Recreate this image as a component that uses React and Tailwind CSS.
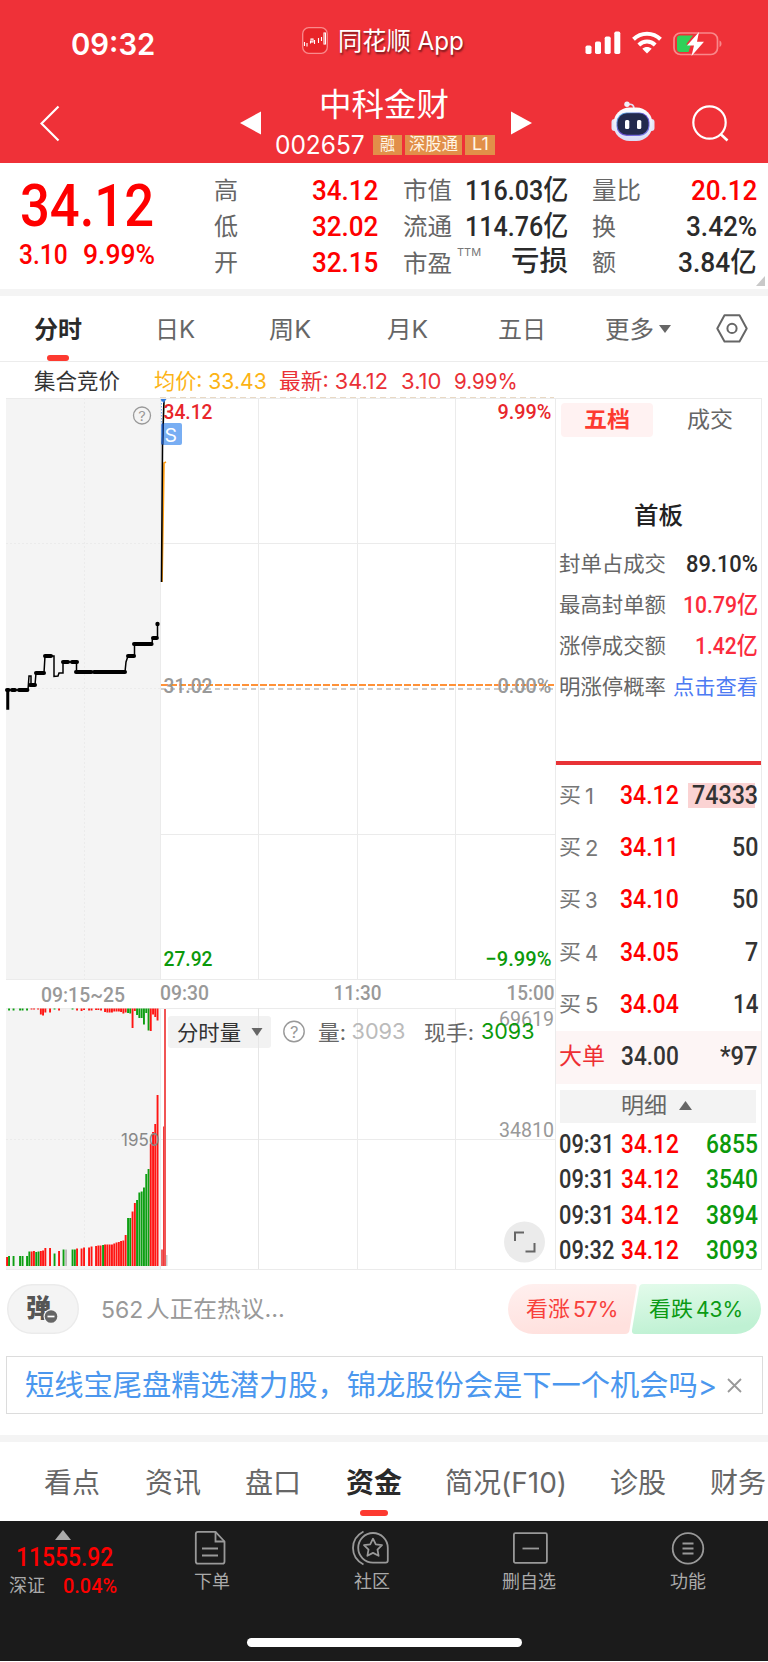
import React, { useLayoutEffect, useRef } from "react";

const NUM = "[font-family:Roboto,'Noto_Sans_CJK_SC',sans-serif]";
const UI = "[font-family:Inter,'Noto_Sans_CJK_SC',sans-serif]";

// Text condensed or stretched horizontally to fill the width of its box.
function Fit({ className = "", children }) {
  const outer = useRef(null);
  const inner = useRef(null);
  useLayoutEffect(() => {
    const w = inner.current.offsetWidth;
    if (w) inner.current.style.transform = `scaleX(${outer.current.clientWidth / w})`;
  }, []);
  return (
    <span ref={outer} className={`block shrink-0 whitespace-nowrap ${className}`}>
      <span ref={inner} className="inline-block origin-left">{children}</span>
    </span>
  );
}

function StatusBar() {
  return (
    <div className="flex h-[86px] items-center text-white">
      <Fit className={`ml-[71px] mt-[1px] w-[84px] text-[30px] font-semibold leading-[86px] ${UI}`}>09:32</Fit>
      <svg className="ml-[147px] -mt-[5px]" width="26" height="27" viewBox="0 0 26 27">
        <rect x="0.7" y="0.7" width="24.6" height="25.6" rx="6" fill="#e82428" stroke="#f98a8c" strokeWidth="1.3" />
        <g fill="none" stroke="#fff" strokeWidth="1.1">
          <path d="M2.5 15v4M5 16v3.5M8.500 14v2.500M12.500 13v4M16.500 11v5M19.500 10v4" />
          <rect x="9" y="12" width="2" height="3" />
          <rect x="22" y="6" width="1.500" height="11" />
        </g>
      </svg>
      <Fit className={`ml-[10px] w-[126px] -mt-[4px] text-[25px] leading-[40px] [text-shadow:1px_2px_2px_rgba(0,0,0,.5)] ${UI}`}>同花顺 App</Fit>
      <svg className="ml-[121px]" width="36" height="24" viewBox="0 0 36 24">
        <g fill="#fff">
          <rect x="0.500" y="14.500" width="6" height="8.500" rx="1.700" />
          <rect x="10" y="10.500" width="6" height="12.500" rx="1.700" />
          <rect x="19.700" y="5.500" width="6" height="17.500" rx="1.700" />
          <rect x="29.300" y="0.500" width="6" height="22.500" rx="1.700" />
        </g>
      </svg>
      <svg className="ml-[11px]" width="30" height="24" viewBox="0 0 30 24">
        <g fill="none" stroke="#fff" strokeWidth="4">
          <path d="M1.500 8.300C9 1 21 1 28.500 8.300" />
          <path d="M6.800 14C11.500 9.400 18.500 9.400 23.200 14" />
        </g>
        <path d="M10.300 17.700C13 15.400 17 15.400 19.700 17.700L15 22.600Z" fill="#fff" />
      </svg>
      <svg className="ml-[11px] mt-[1px]" width="50" height="26" viewBox="0 0 50 26">
        <rect x="1" y="2" width="43.500" height="21.500" rx="6.500" fill="none" stroke="#f9888a" strokeWidth="1.700" />
        <path d="M46.500 9.500c2.700 1 2.700 5.600 0 6.600z" fill="#f9888a" />
        <path d="M7 4.500H20L13 13.500h5L15.500 21H7a3 3 0 0 1-3-3V7.500a3 3 0 0 1 3-3Z" fill="#30d158" />
        <path d="M26 1L14 14.500h7L18.500 25 31 10.700h-7z" fill="#fff" />
      </svg>
    </div>
  );
}

function TitleBar() {
  return (
    <div className="flex h-[77px] items-start text-white">
      <svg className="ml-[40px] mt-[19px]" width="20" height="37" viewBox="0 0 20 37">
        <path d="M18.500 1.500L1.500 18.500 18.500 35.500" fill="none" stroke="#fff" strokeWidth="2.200" />
      </svg>
      <svg className="ml-[180px] mt-[25px]" width="21" height="24"><path d="M0 12L21 0.500V23.500z" fill="#fff" /></svg>
      <div className="ml-[14px] flex w-[220px] flex-col items-center">
        <Fit className={`-ml-[2px] mt-[1px] w-[130px] text-[32px] leading-[36px] ${UI}`}>中科金财</Fit>
        <div className="mt-[11px] flex h-[22px] w-full items-center">
          <Fit className={`w-[90px] text-[25px] leading-[22px] ${UI}`}>002657</Fit>
          <div className={`ml-[8px] flex gap-[3px] text-[17px] leading-[19px] text-[#fff6e6] ${UI}`}>
            <span className="flex h-[20px] w-[29px] items-start justify-center bg-[#e28f49]"><Fit className="w-[15px]">融</Fit></span>
            <span className="flex h-[20px] w-[57px] items-start justify-center bg-[#e28f49]"><Fit className="w-[49px]">深股通</Fit></span>
            <span className="flex h-[20px] w-[30px] items-start justify-center bg-[#e28f49]"><Fit className="w-[17px]">L1</Fit></span>
          </div>
        </div>
      </div>
      <svg className="ml-[16px] mt-[25px]" width="21" height="24"><path d="M21 12L0 0.500V23.500z" fill="#fff" /></svg>
      <svg className="ml-[79px] mt-[15px]" width="44" height="41" viewBox="0 0 44 41">
        <defs>
          <linearGradient id="head" x1="0" y1="0" x2="0" y2="1">
            <stop offset="0" stopColor="#fff" /><stop offset="1" stopColor="#d8dcf6" />
          </linearGradient>
          <linearGradient id="visor" x1="0" y1="0" x2="1" y2="1">
            <stop offset="0" stopColor="#58b8e0" /><stop offset="0.500" stopColor="#6a4dd0" /><stop offset="1" stopColor="#7d86e8" />
          </linearGradient>
        </defs>
        <path d="M17 3.500c4-1 6 1 6 4" fill="none" stroke="#dfe0f5" strokeWidth="1.600" />
        <circle cx="16" cy="3.200" r="2.700" fill="#f1f1fb" />
        <rect x="0.500" y="18" width="7" height="12" rx="3" fill="#e2e4f7" />
        <rect x="36.500" y="18" width="7" height="12" rx="3" fill="#e2e4f7" />
        <rect x="2.500" y="6.500" width="39" height="33.500" rx="16" fill="url(#head)" />
        <rect x="5.500" y="11.500" width="33" height="23.500" rx="10" fill="url(#visor)" />
        <rect x="6.500" y="12.300" width="31" height="21.500" rx="9.500" fill="#232a4d" />
        <rect x="14" y="19" width="4.300" height="9" rx="1.500" fill="#fff" />
        <rect x="26" y="19" width="4.300" height="9" rx="1.500" fill="#fff" />
      </svg>
      <svg className="ml-[37px] mt-[19px]" width="37" height="37" viewBox="0 0 37 37">
        <circle cx="17.500" cy="17.500" r="16.200" fill="none" stroke="#fff" strokeWidth="2.200" />
        <path d="M28.500 29L35.500 35.500" stroke="#fff" strokeWidth="2.600" />
      </svg>
    </div>
  );
}

const STAT = `text-[24px] leading-[36px] text-[#666] ${UI}`;
const VAL = `text-[28px] font-medium leading-[36px] ${NUM}`;

function Quote() {
  return (
    <div className="flex h-[126px] pt-[10px]">
      <div className="ml-[20px] flex w-[134px] flex-col">
        <Fit className={`mt-[5px] w-[134px] text-[60px] font-medium leading-[56px] text-[#fe0000] ${NUM}`}>34.12</Fit>
        <div className={`mt-[4px] flex text-[28px] font-medium leading-[34px] text-[#fe0000] ${NUM}`}>
          <Fit className="-ml-[1px] w-[49px]">3.10</Fit>
          <Fit className="ml-[15px] w-[72px]">9.99%</Fit>
        </div>
      </div>
      <div className="ml-[60px] flex w-[164px] flex-col">
        <div className="flex h-[36px] justify-between"><Fit className={`w-[24px] ${STAT}`}>高</Fit><Fit className={`w-[66px] text-[#fe0000] ${VAL}`}>34.12</Fit></div>
        <div className="flex h-[36px] justify-between"><Fit className={`w-[24px] ${STAT}`}>低</Fit><Fit className={`w-[66px] text-[#fe0000] ${VAL}`}>32.02</Fit></div>
        <div className="flex h-[36px] justify-between"><Fit className={`w-[24px] ${STAT}`}>开</Fit><Fit className={`w-[66px] text-[#fe0000] ${VAL}`}>32.15</Fit></div>
      </div>
      <div className="ml-[25px] flex w-[165px] flex-col text-[#2b2b2b]">
        <div className="flex h-[36px] justify-between"><Fit className={`w-[49px] ${STAT}`}>市值</Fit><Fit className={`w-[103px] ${VAL}`}>116.03亿</Fit></div>
        <div className="flex h-[36px] justify-between"><Fit className={`w-[49px] ${STAT}`}>流通</Fit><Fit className={`w-[103px] ${VAL}`}>114.76亿</Fit></div>
        <div className="flex h-[36px]">
          <Fit className={`mt-[1px] w-[49px] ${STAT}`}>市盈</Fit>
          <Fit className={`ml-[5px] w-[24px] text-[11px] leading-[14px] text-[#777] ${UI}`}>TTM</Fit>
          <Fit className={`ml-[30px] -mt-[1px] w-[57px] ${VAL}`}>亏损</Fit>
        </div>
      </div>
      <div className="ml-[24px] flex w-[165px] flex-col text-[#2b2b2b]">
        <div className="flex h-[36px] justify-between"><Fit className={`w-[49px] ${STAT}`}>量比</Fit><Fit className={`w-[66px] text-[#fe0000] ${VAL}`}>20.12</Fit></div>
        <div className="flex h-[36px] justify-between"><Fit className={`w-[24px] ${STAT}`}>换</Fit><Fit className={`w-[71px] ${VAL}`}>3.42%</Fit></div>
        <div className="flex h-[36px] justify-between"><Fit className={`w-[24px] ${STAT}`}>额</Fit><Fit className={`w-[79px] ${VAL}`}>3.84亿</Fit></div>
      </div>
      <svg className="-ml-[1px] mt-[103px] shrink-0" width="9" height="10"><path d="M9 0V10H0z" fill="#c9c9c9" /></svg>
    </div>
  );
}

function PeriodTabs() {
  return (
    <div className={`flex h-[66px] border-b border-[#ececec] text-[24px] leading-[68px] text-[#666] ${UI}`}>
      <div className="ml-[34px] flex flex-col items-center">
        <Fit className="h-[59px] w-[48px] font-bold text-[#2a2a2a]">分时</Fit>
        <div className="-ml-[1px] h-[6px] w-[22px] rounded-[3px] bg-[#fd3a30]" />
      </div>
      <Fit className="ml-[73px] w-[40px]">日K</Fit>
      <Fit className="ml-[74px] w-[42px]">周K</Fit>
      <Fit className="ml-[76px] w-[41px]">月K</Fit>
      <Fit className="ml-[70px] w-[48px]">五日</Fit>
      <Fit className="ml-[59px] w-[49px]">更多</Fit>
      <svg className="ml-[5px] mt-[29px]" width="12" height="8"><path d="M0 0H12L6 8z" fill="#666" /></svg>
      <svg className="ml-[45px] mt-[18px]" width="32" height="29" viewBox="0 0 32 29">
        <path d="M8.500 1.300H23.500L30.700 14.500L23.500 27.500H8.500L1.300 14.500Z" fill="none" stroke="#666" strokeWidth="2" strokeLinejoin="round" />
        <circle cx="16" cy="14.400" r="4.600" fill="none" stroke="#666" strokeWidth="2" />
      </svg>
    </div>
  );
}

function Legend() {
  return (
    <div className={`flex h-[36px] text-[21.500px] leading-[40px] text-[#ea3036] ${UI}`}>
      <Fit className="ml-[34px] w-[86px] text-[#333]">集合竞价</Fit>
      <Fit className="ml-[34px] w-[113px] text-[#fcb315]">均价: 33.43</Fit>
      <Fit className="ml-[12px] w-[109px]">最新: 34.12</Fit>
      <Fit className="ml-[13px] w-[40px]">3.10</Fit>
      <Fit className="ml-[13px] w-[64px]">9.99%</Fit>
    </div>
  );
}

function T({ x, y, w, size = 21, fill = "#999", weight = 400, ui, children }) {
  return (
    <text x={x} y={y} textLength={w} lengthAdjust="spacingAndGlyphs" fontSize={size} fontWeight={weight} fill={fill} className={ui ? UI : NUM}>
      {children}
    </text>
  );
}

const AUCTION =
  "7,690 7,709 8.500,709 8.500,690 28,690 29,676 31,676 31,685 35,685 36,673 44,673 45,656 54,656 54,676.500 58,676 59,673 63,673 63,662 76.500,662 76.500,672 125,672 126,662 128,656 134.500,656 134.500,644 152,644 152.500,638 157.500,638 157.500,624";
const SEGMENTS = [
  [7, 9, 690], [12, 15, 690], [19, 28, 690], [30, 35, 685], [36, 44, 673], [45, 51, 656], [63, 68, 662], [72, 77, 662],
  [76, 92, 672], [94, 125, 672], [128, 134, 656], [134, 152, 644], [153, 157, 638],
];

// Auction volume bars: x position, height from the baseline, colour (r, g or n).
const BARS = [
  [7, 9, "r"], [9, 10, "g"], [13.500, 10, "g"], [20, 10, "g"], [22.500, 10, "g"], [27, 10, "g"], [29.300, 14.500, "g"],
  [31.600, 14.500, "r"], [33.900, 15, "r"], [36.200, 14, "g"], [38.500, 14.500, "g"], [40.800, 15, "r"], [43, 15.500, "r"],
  [45.300, 18, "r"], [50, 18, "r"], [54.500, 12.500, "g"], [59, 15, "r"], [63.500, 16.500, "g"], [66, 16.500, "n"],
  [72.500, 16.500, "g"], [74.800, 16.500, "g"], [77, 17.500, "r"], [81.500, 17.500, "r"], [84, 18.500, "r"],
  [89, 18.500, "r"], [91.500, 19.500, "r"], [96, 20, "r"], [98.300, 20.500, "r"], [100.500, 20.500, "r"], [103, 21, "g"],
  [105, 21.500, "r"], [107.300, 21.500, "r"], [109.600, 21.500, "r"], [111.900, 21.500, "r"], [114.200, 22.500, "r"],
  [116.500, 23.500, "r"], [118.800, 24, "r"], [121, 25, "r"], [123.300, 25.500, "r"], [125.600, 31, "r"],
  [128, 48, "g"], [130.200, 48, "g"], [132.500, 54.500, "r"], [134.800, 63, "r"], [137, 66, "g"], [139.300, 73.500, "g"],
  [141.600, 74.500, "g"], [143.900, 78.500, "g"], [146.200, 92, "g"], [148.500, 97, "g"], [150.700, 122.500, "r"],
  [153, 134, "r"], [155.200, 142, "r"], [157.500, 171, "r"],
];
const TOP_BARS = [
  [9, 2, "g"], [13.500, 2, "g"], [20, 2, "g"], [22.500, 2, "g"], [27, 2, "g"], [31.500, 1, "r"], [34, 1, "r"], [38, 1, "r"],
  [40.800, 6, "r"], [43, 7, "r"], [45.300, 4, "r"], [50, 4, "r"], [54.500, 1, "g"], [59, 2, "r"], [72.500, 1, "g"], [77, 2, "r"],
  [81.500, 2.500, "r"], [84, 1.500, "r"], [89, 2, "r"], [91.500, 2, "r"], [96, 1.500, "r"], [98.300, 1.500, "r"], [101, 2, "r"],
  [105, 3.500, "r"], [107.300, 4, "r"], [109.600, 4, "r"], [111.900, 4, "r"], [114.200, 3, "r"], [116.500, 3, "r"], [118.800, 3, "r"],
  [121, 3.500, "r"], [123.300, 5, "r"], [125.600, 4, "r"], [128, 4.500, "g"], [130.200, 5, "g"], [132.500, 19.500, "r"],
  [134.800, 2.500, "r"], [137, 6.500, "g"], [139.300, 9.500, "g"], [141.600, 9.500, "g"], [143.900, 16, "g"], [146.200, 4.500, "g"],
  [148.500, 22, "g"], [150.700, 22.500, "r"], [153, 6, "r"], [155.200, 8.500, "r"], [157.500, 12, "r"],
];
const HUE = { r: "#ff1512", g: "#0d9f12", n: "#bbbbbb" };

function PriceChart() {
  return (
    <svg className="block shrink-0" width="555" height="610" viewBox="0 397 555 610">
      <rect x="6" y="398" width="154" height="581" fill="#f4f4f4" />
      <g stroke="#ebebeb" strokeWidth="1" strokeDasharray="2 2">
        <path d="M84.500 398V979M6 543.500H160M6 688.500H160" />
      </g>
      <g stroke="#ebebeb" strokeWidth="1" fill="none">
        <path d="M6 398.500H555M160.500 398V979M258.500 398V979M357.500 398V979M455.500 398V979M160 543.500H555M160 834.500H555M6 979.500H555" />
      </g>
      <path d="M160 397.500H554" stroke="#e9d9c4" strokeDasharray="6 4" />
      <polyline points={AUCTION} fill="none" stroke="#000" strokeWidth="1.500" />
      {SEGMENTS.map(([a, b, y]) => (
        <path key={a + "-" + y} d={`M${a} ${y}H${b}`} stroke="#000" strokeWidth="4" strokeLinecap="round" strokeDasharray="1.500 0.800" />
      ))}
      <circle cx="157.500" cy="624" r="2.200" />
      <circle cx="142" cy="415.500" r="8.500" fill="none" stroke="#999" strokeWidth="1.300" />
      <T x={138.300} y={420.500} w={7.500} size={13.500} ui>?</T>
      <path d="M162 582L164 463L166 462" fill="none" stroke="#ff9c10" strokeWidth="1.700" />
      <rect x="161" y="423" width="21" height="22" rx="2" fill="#78aef3" />
      <path d="M161.500 400V423" stroke="#78aef3" strokeDasharray="1.500 1.500" />
      <path d="M161.500 582L162.500 445L164 400" fill="none" stroke="#000" strokeWidth="1.600" />
      <path d="M162.400 444.500L162.700 423.500" stroke="#1c4fa8" strokeWidth="1.800" />
      <path d="M160.500 399H166.500L163.500 403z" fill="#3079dc" />
      <T x={164.500} y={441.500} w={12.500} size={19} fill="#fff" ui>S</T>
      <path d="M161 685H554" stroke="#ff9238" strokeWidth="2" strokeDasharray="7 2" />
      <path d="M161 689H554" stroke="#999" strokeWidth="1" strokeDasharray="5 4" />
      <T x={163.500} y={418.500} w={49} fill="#e8262b" weight={500}>34.12</T>
      <T x={497.500} y={418.500} w={54} fill="#e8262b" weight={500}>9.99%</T>
      <T x={163.500} y={692.500} w={49} weight={500}>31.02</T>
      <T x={497.500} y={692.500} w={54} weight={500}>0.00%</T>
      <T x={163.500} y={966} w={49} fill="#0b990b" weight={500}>27.92</T>
      <T x={485.500} y={966} w={66} fill="#0b990b" weight={500}>−9.99%</T>
      <T x={41} y={1001.500} w={84} weight={500}>09:15~25</T>
      <T x={160} y={1000} w={49} weight={500}>09:30</T>
      <T x={333.500} y={1000} w={48} weight={500}>11:30</T>
      <T x={506.500} y={1000} w={48} weight={500}>15:00</T>
    </svg>
  );
}

function VolumeChart() {
  return (
    <svg className="block shrink-0" width="555" height="263" viewBox="0 1007 555 263">
      <rect x="6" y="1008" width="154" height="261" fill="#f4f4f4" />
      <path d="M84.500 1008V1269M6 1139.500H160" stroke="#ebebeb" strokeDasharray="2 2" />
      <path d="M6 1008.500H555M160.500 1008V1269M357.500 1008V1269M455.500 1008V1269M160 1139.500H555M6 1269.500H555" stroke="#ebebeb" />
      {BARS.map(([x, h, c]) => <rect key={x} x={x - 0.900} y={1266 - h} width="1.900" height={h} fill={HUE[c]} />)}
      {TOP_BARS.map(([x, h, c]) => <rect key={x} x={x - 0.900} y={1008.500} width="1.900" height={h} fill={HUE[c]} />)}
      <rect x="161" y="1249.500" width="2" height="16.500" fill="#ee5a5a" />
      <rect x="163" y="1126.500" width="2" height="139.500" fill="#ef3a3a" />
      <rect x="164" y="1009" width="2" height="257" fill="#f05555" />
      <rect x="166" y="1255" width="1.500" height="11" fill="#ccc" />
      <T x={121} y={1146} w={38.500} size={17.500} fill="#888" ui>1950</T>
      <rect x="168" y="1016" width="103" height="32" rx="3" fill="#f2f2f2" />
      <path d="M258.500 1008V1269" stroke="#e6e6e6" />
      <T x={177} y={1039.500} w={64} size={21} fill="#333" ui>分时量</T>
      <path d="M251.500 1028H262.500L257 1036z" fill="#666" />
      <circle cx="294" cy="1031.500" r="10.200" fill="none" stroke="#999" strokeWidth="1.400" />
      <T x={290} y={1037.500} w={8.500} size={16} ui>?</T>
      <T x={318} y={1039.500} w={28} size={21} fill="#666" ui>量:</T>
      <T x={351.500} y={1039} w={54} size={21} fill="#bbb" ui>3093</T>
      <T x={424} y={1039.500} w={50} size={21} fill="#666" ui>现手:</T>
      <T x={499} y={1026} w={55} size={20.500}>69619</T>
      <T x={481} y={1039} w={53.500} size={21} fill="#0b990b" ui>3093</T>
      <T x={499} y={1137} w={55} size={20.500}>34810</T>
      <circle cx="524.500" cy="1242" r="20.500" fill="#ebebeb" />
      <path d="M515 1241V1232.500H524M525.500 1251.500H534.500V1243" fill="none" stroke="#666" strokeWidth="2" />
    </svg>
  );
}

const LIMITS = [
  ["封单占成交", "89.10%", "w-[72px] text-[#2b2b2b]"],
  ["最高封单额", "10.79亿", "w-[75px] text-[#fb2b3d]"],
  ["涨停成交额", "1.42亿", "w-[63px] text-[#fb2b3d]"],
];
const BIDS = [
  ["1", "34.12", "74333", "w-[66px]", "w-[9px] mr-[4px]"],
  ["2", "34.11", "50", "w-[26px]", "w-[13px]"],
  ["3", "34.10", "50", "w-[26px]", "w-[13px]"],
  ["4", "34.05", "7", "w-[13px]", "w-[13px]"],
  ["5", "34.04", "14", "w-[25px]", "w-[13px]"],
];
const TICKS = [["09:31", "6855"], ["09:31", "3540"], ["09:31", "3894"], ["09:32", "3093"]];

function OrderPanel() {
  return (
    <div className="mt-[1px] flex h-[872px] w-[207px] flex-col border border-[#ebebeb]">
      <div className={`mt-[4px] flex h-[34px] shrink-0 text-[22px] leading-[32px] ${UI}`}>
        <div className="ml-[5px] flex w-[92px] justify-center rounded-[4px] bg-[#fff2f2]">
          <Fit className="w-[46px] font-semibold text-[#fd3a30]">五档</Fit>
        </div>
        <Fit className="ml-[34px] w-[46px] text-[#666]">成交</Fit>
      </div>
      <div className="mt-[61px] flex shrink-0 justify-center">
        <Fit className={`w-[49px] text-[24px] font-medium leading-[36px] text-[#222] ${UI}`}>首板</Fit>
      </div>
      <div className="mt-[9px] flex shrink-0 flex-col">
        {LIMITS.map(([k, v, c]) => (
          <div key={k} className="flex h-[41.300px] items-center justify-between pl-[3px] pr-[3px]">
            <Fit className={`w-[107px] text-[21px] leading-[40px] text-[#666] ${UI}`}>{k}</Fit>
            <Fit className={`text-[24px] font-medium leading-[40px] ${NUM} ${c}`}>{v}</Fit>
          </div>
        ))}
        <div className={`flex h-[41px] items-center justify-between pl-[3px] pr-[3px] text-[21px] leading-[40px] ${UI}`}>
          <Fit className="w-[107px] text-[#666]">明涨停概率</Fit>
          <Fit className="w-[85px] text-[#4d7bf3]">点击查看</Fit>
        </div>
      </div>
      <div className="mt-[53px] h-[4px] shrink-0 bg-[#e83236]" />
      <div className="mt-[4px] flex shrink-0 flex-col">
        {BIDS.map(([n, p, q, c, d]) => (
          <div key={n} className="flex h-[52.400px] items-center justify-between pl-[3px] pr-[3px] pt-[1px] leading-[40px]">
            <div className={`flex text-[#777] ${UI}`}>
              <Fit className="-mt-[1px] w-[22px] text-[21px]">买</Fit>
              <Fit className={`ml-[4px] text-[22px] ${d}`}>{n}</Fit>
            </div>
            <Fit className={`ml-[20px] w-[59px] text-[25px] font-medium text-[#fe0000] ${NUM}`}>{p}</Fit>
            <div className={`flex w-[77px] justify-end ${NUM} text-[25px] font-medium text-[#333]`}>
              {n === "1" ? (
                <div className="flex h-[25px] w-[70px] bg-[linear-gradient(to_right,#fbd3d3_67px,#fff_67px)] pl-[4px] leading-[26px]"><Fit className={c}>{q}</Fit></div>
              ) : (
                <Fit className={c}>{q}</Fit>
              )}
            </div>
          </div>
        ))}
        <div className={`flex h-[53px] items-center bg-[#fdf5f5] pl-[3px] pr-[3px] text-[25px] font-medium leading-[40px] text-[#333] ${NUM}`}>
          <Fit className={`-mt-[2px] w-[46px] text-[23px] font-normal text-[#ee2f33] ${UI}`}>大单</Fit>
          <Fit className="ml-[16px] w-[58px]">34.00</Fit>
          <Fit className="ml-[41px] w-[38px]">*97</Fit>
        </div>
      </div>
      <div className={`ml-[4px] mt-[6px] flex h-[33px] w-[196px] shrink-0 items-center bg-[#f3f3f3] text-[22px] leading-[30px] text-[#666] ${UI}`}>
        <Fit className="-mt-[2px] ml-[61px] w-[46px]">明细</Fit>
        <svg className="ml-[12px] -mt-[1px]" width="13" height="9"><path d="M0 9H13L6.500 0z" fill="#666" /></svg>
      </div>
      <div className="mt-[4px] flex shrink-0 flex-col">
        {TICKS.map(([t, q], i) => (
          <div key={i} className={`flex h-[35.600px] items-center pl-[3px] text-[25px] font-medium leading-[36px] ${NUM}`}>
            <Fit className="w-[55px] text-[#333]">{t}</Fit>
            <Fit className="ml-[7px] w-[58px] text-[#fe0000]">34.12</Fit>
            <Fit className="ml-[27px] w-[52px] text-[#0b990b]">{q}</Fit>
          </div>
        ))}
      </div>
    </div>
  );
}

function Discussion() {
  return (
    <div className={`flex h-[50px] items-center ${UI}`}>
      <svg className="ml-[7px]" width="72" height="50" viewBox="0 0 72 50">
        <rect x="0.700" y="0.700" width="70.600" height="48.600" rx="24.300" fill="#f4f4f4" stroke="#ebebeb" strokeWidth="1.400" />
        <text x="19" y="33" fontSize="25" fontWeight="900" fill="#555" textLength="25" className={UI}>弹</text>
        <circle cx="44" cy="32.500" r="7.500" fill="#f4f4f4" />
        <circle cx="44" cy="32.500" r="6.300" fill="#666" />
        <path d="M40.500 32.500H47.500" stroke="#fff" strokeWidth="1.700" />
      </svg>
      <Fit className="ml-[22px] mt-[2px] w-[42px] text-[23px] leading-[48px] text-[#999]">562</Fit>
      <Fit className="ml-[3px] w-[139px] text-[23px] leading-[48px] text-[#999]">人正在热议...</Fit>
      <div className="relative ml-[223px] h-[50px] w-[253px]">
        <svg className="absolute inset-0" width="253" height="50" viewBox="0 0 253 50">
          <defs>
            <linearGradient id="bull" x1="0" y1="0" x2="0.300" y2="1"><stop offset="0" stopColor="#fff0ef" /><stop offset="1" stopColor="#ffe1de" /></linearGradient>
            <linearGradient id="bear" x1="0" y1="0" x2="0.300" y2="1"><stop offset="0" stopColor="#e3fbeb" /><stop offset="1" stopColor="#bff1d3" /></linearGradient>
          </defs>
          <path d="M25 0H126Q129 0 128.600 3L121.500 46Q121 50 117 50H25A25 25 0 0 1 25 0Z" fill="url(#bull)" />
          <path d="M135 0H228A25 25 0 0 1 228 50H127Q123.500 50 124 46L131 4Q131.500 0 135 0Z" fill="url(#bear)" />
        </svg>
        <div className="relative flex text-[21px] leading-[52px]">
          <Fit className="-mt-[1px] ml-[18px] w-[44px] text-[#f8403b]">看涨</Fit>
          <Fit className="ml-[3px] w-[45px] text-[#f8403b]">57%</Fit>
          <Fit className="-mt-[1px] ml-[31px] w-[44px] text-[#0b9a14]">看跌</Fit>
          <Fit className="ml-[3px] w-[47px] text-[#0b9a14]">43%</Fit>
        </div>
      </div>
    </div>
  );
}

function Banner() {
  return (
    <div className={`ml-[6px] mt-[22px] flex h-[58px] w-[757px] items-center border-[1.500px] border-[#dcdcdc] ${UI}`}>
      <Fit className="ml-[18px] mt-[1px] w-[692px] text-[29px] leading-[54px] text-[#4b97ee]">短线宝尾盘精选潜力股，锦龙股份会是下一个机会吗&gt;</Fit>
      <svg className="ml-[10px]" width="15" height="15"><path d="M1 1L14 14M14 1L1 14" stroke="#999" strokeWidth="1.800" /></svg>
    </div>
  );
}

function SectionTabs() {
  return (
    <div className={`flex h-[79px] shrink-0 overflow-hidden text-[28px] leading-[82px] text-[#666] ${UI}`}>
      <Fit className="ml-[44px] w-[56px]">看点</Fit>
      <Fit className="ml-[45px] w-[56px]">资讯</Fit>
      <Fit className="ml-[44px] w-[56px]">盘口</Fit>
      <div className="ml-[45px] flex flex-col items-center">
        <Fit className="h-[68px] w-[56px] font-bold text-[#2a2a2a]">资金</Fit>
        <div className="h-[6px] w-[28px] rounded-[3px] bg-[#fd3a30]" />
      </div>
      <Fit className="ml-[43px] w-[122px]">简况(F10)</Fit>
      <Fit className="ml-[43px] w-[56px]">诊股</Fit>
      <Fit className="ml-[44px] w-[56px]">财务</Fit>
    </div>
  );
}

function BottomNav() {
  const label = "text-[18px] leading-[28px] text-[#aaa]";
  return (
    <div className={`flex h-[140px] shrink-0 flex-col items-center bg-[#1b1b1b] ${UI}`}>
      <div className="flex h-[117px] w-full">
        <div className="ml-[9px] flex w-[109px] flex-col">
          <svg className="ml-[46px] mt-[9px] block" width="16" height="10"><path d="M0 10H16L8 0z" fill="#aaa" /></svg>
          <Fit className={`ml-[7px] mt-[2px] w-[97px] text-[25px] font-medium leading-[32px] text-[#fe0000] ${NUM}`}>11555.92</Fit>
          <div className="flex h-[24px] items-center">
            <Fit className={`w-[36px] ${label}`}>深证</Fit>
            <Fit className={`ml-[18px] w-[54px] text-[21px] font-medium leading-[24px] text-[#fe0000] ${NUM}`}>0.04%</Fit>
          </div>
        </div>
        <div className="ml-[76px] flex w-[36px] flex-col pt-[9px]">
          <svg width="33" height="36" viewBox="0 0 33 36" fill="none" stroke="#999" strokeWidth="1.800">
            <path d="M21.500 1.800H4Q1.800 1.800 1.800 4V31.500Q1.800 33.700 4 33.700H28.500Q30.500 33.700 30.500 31.500V11.500Z" strokeLinejoin="round" />
            <path d="M21.500 1.800V11.500H30.500M8 18.500H24M8 25.500H24" />
          </svg>
          <Fit className={`mt-[2px] w-[36px] ${label}`}>下单</Fit>
        </div>
        <div className="ml-[121px] flex w-[39px] flex-col pt-[9px]">
          <svg width="40" height="36" viewBox="0 0 40 36" fill="none" stroke="#999" strokeWidth="1.800">
            <path d="M22 3A14.800 14.800 0 0 1 36.800 17.800V30.500Q36.800 32.600 34.700 32.600H22A14.800 14.800 0 0 1 22 3Z" />
            <path d="M12.500 1.500C-1.500 9 -1.500 27 12.500 34.500" />
            <path d="M22 8.700L24.800 14.300 31 15.200 26.500 19.600 27.600 25.800 22 22.900 16.400 25.800 17.500 19.600 13 15.200 19.200 14.300Z" strokeLinejoin="round" />
          </svg>
          <Fit className={`mt-[2px] ml-[3px] w-[36px] ${label}`}>社区</Fit>
        </div>
        <div className="ml-[112px] flex w-[54px] flex-col pt-[9px]">
          <svg className="ml-[10px]" width="38" height="36" viewBox="0 0 38 36" fill="none" stroke="#999" strokeWidth="1.800">
            <rect x="1.900" y="3.200" width="33" height="29.600" rx="1.500" />
            <path d="M10.500 18.500H27" />
          </svg>
          <Fit className={`mt-[2px] w-[54px] ${label}`}>删自选</Fit>
        </div>
        <div className="ml-[114px] flex w-[36px] flex-col pt-[9px]">
          <svg width="36" height="36" viewBox="0 0 36 36" fill="none" stroke="#999" strokeWidth="1.800">
            <circle cx="18" cy="18.400" r="15.300" />
            <path d="M12.500 13.500H23.500M12.500 18.500H23.500M12.500 23.500H23.500" />
          </svg>
          <Fit className={`mt-[2px] w-[36px] ${label}`}>功能</Fit>
        </div>
      </div>
      <div className="h-[9px] w-[275px] rounded-full bg-white" />
    </div>
  );
}

export default function App() {
  return (
    <div className="flex h-[1662px] w-[768px] flex-col overflow-hidden bg-white">
      <div className="h-[163px] shrink-0 bg-[#ef3138]">
        <StatusBar />
        <TitleBar />
      </div>
      <div className="shrink-0"><Quote /></div>
      <div className="h-[7px] shrink-0 bg-[#f4f4f4]" />
      <div className="shrink-0"><PeriodTabs /></div>
      <div className="-mt-px shrink-0"><Legend /></div>
      <div className="flex h-[873px] shrink-0">
        <div className="flex w-[555px] flex-col">
          <PriceChart />
          <VolumeChart />
        </div>
        <OrderPanel />
      </div>
      <div className="mt-[14px] shrink-0"><Discussion /></div>
      <div className="shrink-0"><Banner /></div>
      <div className="mt-[21px] h-[7px] shrink-0 bg-[#f4f4f4]" />
      <SectionTabs />
      <BottomNav />
    </div>
  );
}
